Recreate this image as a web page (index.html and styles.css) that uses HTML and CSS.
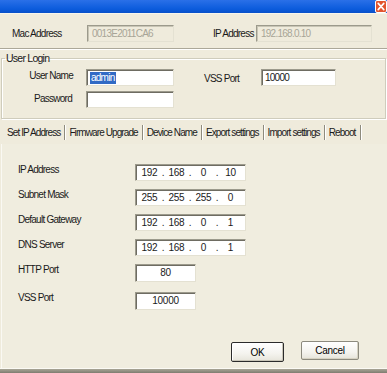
FILE: index.html
```html
<!DOCTYPE html>
<html>
<head>
<meta charset="utf-8">
<link rel="stylesheet" href="styles.css">
</head>
<body>
<div class="window">
  <div class="titlebar">
    <div class="close">
      <svg width="12" height="13" viewBox="0 0 12 13"><rect x="0.5" y="0.5" width="11" height="12" rx="1.5" fill="#E2552F" stroke="#fff" stroke-width="1"/><path d="M3.2 3.4 L8.8 9.6 M8.8 3.4 L3.2 9.6" stroke="#fff" stroke-width="1.6" stroke-linecap="round"/></svg>
    </div>
  </div>
  <div class="toprow">
    <span class="tlabel mac">Mac Address</span>
    <div class="field disabled macfield">0013E2011CA6</div>
    <span class="tlabel ipl">IP Address</span>
    <div class="field disabled ipfield">192.168.0.10</div>
  </div>
  <div class="sep"></div>
  <fieldset class="group">
    <legend>User Login</legend>
    <div class="login">
      <span class="llabel">User Name</span>
      <div class="field input uname"><span class="sel">admin</span></div>
      <span class="llabel vss">VSS Port</span>
      <div class="field input vport">10000</div>
      <span class="llabel pw">Password</span>
      <div class="field input pword"></div>
    </div>
  </fieldset>
  <div class="tabs">
    <span class="tab active">Set IP Address</span>
    <span class="tab">Firmware Upgrade</span>
    <span class="tab">Device Name</span>
    <span class="tab">Export settings</span>
    <span class="tab">Import settings</span>
    <span class="tab">Reboot</span>
  </div>
  <div class="panel">
    <div class="row">
      <span class="plabel">IP Address</span>
      <div class="field ipbox"><span>192</span><i>.</i><span>168</span><i>.</i><span>0</span><i>.</i><span>10</span></div>
    </div>
    <div class="row">
      <span class="plabel">Subnet Mask</span>
      <div class="field ipbox"><span>255</span><i>.</i><span>255</span><i>.</i><span>255</span><i>.</i><span>0</span></div>
    </div>
    <div class="row">
      <span class="plabel">Default Gateway</span>
      <div class="field ipbox"><span>192</span><i>.</i><span>168</span><i>.</i><span>0</span><i>.</i><span>1</span></div>
    </div>
    <div class="row">
      <span class="plabel">DNS Server</span>
      <div class="field ipbox"><span>192</span><i>.</i><span>168</span><i>.</i><span>0</span><i>.</i><span>1</span></div>
    </div>
    <div class="row port">
      <span class="plabel">HTTP Port</span>
      <div class="field portbox">80</div>
    </div>
    <div class="row port last">
      <span class="plabel">VSS Port</span>
      <div class="field portbox">10000</div>
    </div>
    <div class="buttons">
      <button class="btn default">OK</button>
      <button class="btn cancel">Cancel</button>
    </div>
  </div>
  <div class="bottomedge"></div>
</div>
</body>
</html>
```
FILE: styles.css
```css
* { box-sizing: border-box; }
html, body { margin: 0; padding: 0; }
body {
  width: 387px;
  height: 373px;
  overflow: hidden;
  background: #EFEBDC;
  font-family: "Liberation Sans", Arial, sans-serif;
  font-size: 10px;
  letter-spacing: -0.75px;
  color: #1a1a1a;
  white-space: nowrap;
}
.window {
  display: flex;
  flex-direction: column;
  height: 373px;
}
.titlebar {
  height: 14px;
  background: linear-gradient(#2A70E8, #0B5BDC 70%, #0950C8);
  border-bottom: 1px solid #F7F5EC;
  display: flex;
  justify-content: flex-end;
}
.close {
  width: 12px;
  height: 13px;
  line-height: 0;
}
.toprow {
  display: flex;
  align-items: flex-start;
  height: 34px;
  padding-top: 11px;
}
.tlabel {
  line-height: 17px;
  height: 17px;
}
.mac { width: 87px; padding-left: 12px; }
.ipl { width: 43px; margin-left: 39px; }
.field {
  height: 17px;
  line-height: 15px;
  border: 1px solid #9C9A8C;
  border-right-color: #E4E1D2;
  border-bottom-color: #E4E1D2;
  box-shadow: inset 1px 1px 0 #6E6C62;
}
.disabled {
  background: #EFEBDC;
  color: #A8A597;
  padding-left: 4px;
  box-shadow: inset 1px 1px 0 #C8C5B5;
}
.macfield { width: 87px; }
.ipfield { width: 116px; }
.sep {
  height: 2px;
  border-top: 1px solid #ACA899;
  border-bottom: 1px solid #FFFFFF;
}
.group {
  margin: 2px 1px 0 1px;
  padding: 5px 0 10px 0;
  border: 1px solid #CFCCBC;
  box-shadow: inset 1px 1px 0 #fff, 1px 1px 0 #fff;
  min-inline-size: 0;
}
.group legend {
  padding: 0 1px;
  margin-left: 3px;
  line-height: 12px;
  font-size: 10.5px;
}
.login {
  display: grid;
  grid-template-columns: 71px 101px 87px 75px;
  grid-template-rows: 17px 17px;
  row-gap: 5px;
}
.llabel {
  line-height: 13px;
  text-align: right;
}
.llabel.vss { text-align: left; padding-left: 30px; line-height: 19px; }
.llabel.pw { padding-right: 1px; line-height: 15px; }
.uname, .pword { width: 88px; margin-left: 13px; }
.vport { width: 75px; }
.pword { grid-column: 2; }
.input {
  background: #fff;
  padding-left: 3px;
  height: 17px;
}
.sel {
  background: #316AC5;
  color: #fff;
  padding: 0 1px;
  display: inline-block;
  line-height: 12px;
}
.tabs {
  display: flex;
  padding: 6px 0 0 4px;
  height: 25px;
}
.tab {
  height: 15px;
  line-height: 15px;
  padding: 0 4px 0 3px;
  border-right: 1px solid #8E8B7D;
  box-shadow: 1px 0 0 #fff;
  margin-right: 1px;
  letter-spacing: -0.9px;
}
.panel {
  flex: 1;
  display: flex;
  flex-direction: column;
  padding: 20px 0 0 16px;
  background: #F0EDDF;
  border-left: 1px solid #FAF9F3;
  margin-left: 1px;
}
.row {
  display: flex;
  align-items: flex-start;
  margin-bottom: 8px;
}
.plabel {
  width: 117px;
  line-height: 12px;
}
.ipbox {
  background: #fff;
  width: 111px;
  display: flex;
  padding-left: 3px;
  letter-spacing: -0.3px;
}
.ipbox span { width: 21px; text-align: center; }
.ipbox i { font-style: normal; width: 6px; text-align: center; }
.portbox {
  background: #fff;
  width: 61px;
  height: 18px;
  line-height: 16px;
  text-align: center;
  letter-spacing: -0.3px;
}
.row.last { margin-top: 2px; }
.buttons {
  margin-top: auto;
  margin-bottom: 6px;
  padding-left: 213px;
  display: flex;
  align-items: flex-start;
  gap: 17px;
}
.btn {
  font-family: inherit;
  font-size: 10px;
  letter-spacing: -0.3px;
  color: #000;
  height: 20px;
  padding: 0;
  background: linear-gradient(#FFFFFF, #F4F3EE 60%, #E6E4DA);
  border: 1px solid #8C8A7E;
  border-radius: 2px;
  box-shadow: inset -1px -1px 0 #D6D2C2;
}
.btn.default {
  width: 53px;
  border: 1px solid #2B2B2B;
  box-shadow: inset 1px 1px 0 #fff, inset -1px -1px 0 #C9C6B8;
  margin-top: 1px;
}
.btn.cancel { width: 58px; height: 19px; }
.bottomedge {
  height: 5px;
  border-top: 1px solid #FBFAF4;
  background: linear-gradient(#A8A596, #7E7C70);
}
```
